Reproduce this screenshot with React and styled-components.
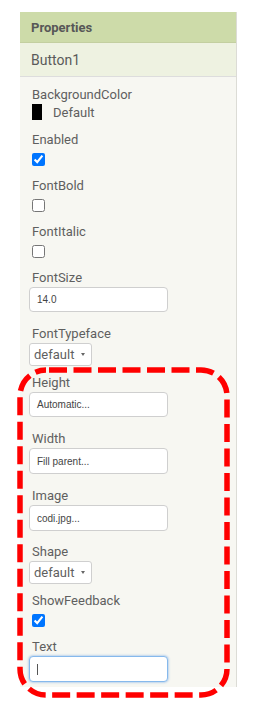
import React from "react";
import styled, { createGlobalStyle } from "styled-components";

const GlobalStyle = createGlobalStyle`
  body {
    margin: 0;
    background: #ffffff;
    font-family: Roboto, "Liberation Sans", sans-serif;
  }
`;

const Page = styled.div`
  position: relative;
  width: 254px;
  height: 708px;
  padding: 12px 0 0 20px;
  box-sizing: border-box;
`;

const Panel = styled.div`
  width: 217px;
  border-right: 1px solid #dcdcd6;
  box-sizing: border-box;
  background: #f7f7f2;
`;

const Header = styled.div`
  height: 30px;
  display: flex;
  align-items: center;
  padding-left: 11px;
  background: #cddba9;
  border-bottom: 1px solid #c3cfa0;
  font-size: 13px;
  font-weight: 700;
  color: #575757;
`;

const Component = styled.div`
  height: 33px;
  display: flex;
  align-items: center;
  padding-left: 11px;
  background: #eef2e1;
  border-bottom: 1px solid #dddddd;
  font-size: 14px;
  color: #5a5a5a;
`;

const Body = styled.div`
  padding: 9px 0 5px 9px;
`;

const Property = styled.div`
  display: flex;
  flex-direction: column;
  align-items: flex-start;
  margin-bottom: ${(p) => p.$gap}px;
`;

const Label = styled.div`
  height: 18px;
  line-height: 18px;
  padding-left: 3px;
  font-size: 13px;
  color: #5f5f5f;
`;

const ColorRow = styled.div`
  display: flex;
  align-items: center;
  gap: 11px;
  height: 16px;
  padding-left: 3px;
  font-size: 13px;
  color: #5f5f5f;
`;

const Swatch = styled.span`
  width: 10px;
  height: 16px;
  background: #000;
`;

const Check = styled.input`
  width: 13px;
  height: 13px;
  margin: 4px 0 0 3px;
`;

const TextBox = styled.div`
  width: 139px;
  height: ${(p) => p.$h}px;
  box-sizing: border-box;
  display: flex;
  align-items: center;
  padding-left: 7px;
  background: #fff;
  border: 1px solid ${(p) => (p.$focus ? "#86b9ec" : "#cfcfcf")};
  border-radius: 4px;
  box-shadow: ${(p) => (p.$focus ? "0 0 2px 1px rgba(120,170,230,0.45)" : "none")};
  font-family: "Liberation Sans", Arial, sans-serif;
  font-size: 10px;
  color: #444;
`;

const Caret = styled.span`
  width: 1px;
  height: 11px;
  background: #555;
`;

const Select = styled.div`
  height: 23px;
  box-sizing: border-box;
  display: flex;
  align-items: center;
  gap: 7px;
  padding: 0 6px 0 4px;
  background: #fff;
  border: 1px solid #cfcfcf;
  border-radius: 3px;
  font-size: 13px;
  color: #5f5f5f;
`;

const Arrow = styled.span`
  width: 0;
  height: 0;
  border-left: 2px solid transparent;
  border-right: 2px solid transparent;
  border-top: 3px solid #666;
`;

const Marker = styled.svg`
  position: absolute;
  left: 17px;
  top: 367px;
  pointer-events: none;
`;

const checkbox = (label, on) => ({ kind: "check", label, on, gap: 11 });
const text = (label, value, h = 25, gap = 13) => ({ kind: "text", label, value, h, gap });
const select = (label, value) => ({ kind: "select", label, value, gap: 8 });

const props = [
  checkbox("Enabled", true),
  checkbox("FontBold", false),
  checkbox("FontItalic", false),
  text("FontSize", "14.0"),
  select("FontTypeface", "default"),
  text("Height", "Automatic..."),
  text("Width", "Fill parent...", 26),
  text("Image", "codi.jpg...", 26, 12),
  select("Shape", "default"),
  checkbox("ShowFeedback", true),
];

const Control = ({ p }) => {
  if (p.kind === "check") return <Check type="checkbox" defaultChecked={p.on} />;
  if (p.kind === "select")
    return (
      <Select>
        {p.value}
        <Arrow />
      </Select>
    );
  return <TextBox $h={p.h}>{p.value}</TextBox>;
};

export default function App() {
  return (
    <>
      <GlobalStyle />
      <Page>
        <Panel>
          <Header>Properties</Header>
          <Component>Button1</Component>
          <Body>
            <Property $gap={11}>
              <Label>BackgroundColor</Label>
              <ColorRow>
                <Swatch />
                Default
              </ColorRow>
            </Property>
            {props.map((p) => (
              <Property key={p.label} $gap={p.gap}>
                <Label>{p.label}</Label>
                <Control p={p} />
              </Property>
            ))}
            <Property $gap={0}>
              <Label>Text</Label>
              <TextBox $h={26} $focus>
                <Caret />
              </TextBox>
            </Property>
          </Body>
        </Panel>
        <Marker width="214" height="332" viewBox="0 0 214 332">
          <rect
            x="3"
            y="3"
            width="207"
            height="325"
            rx="26"
            fill="none"
            stroke="#ff0000"
            strokeWidth="5.5"
            strokeDasharray="18 6.5"
            strokeDashoffset="-3"
          />
        </Marker>
      </Page>
    </>
  );
}
